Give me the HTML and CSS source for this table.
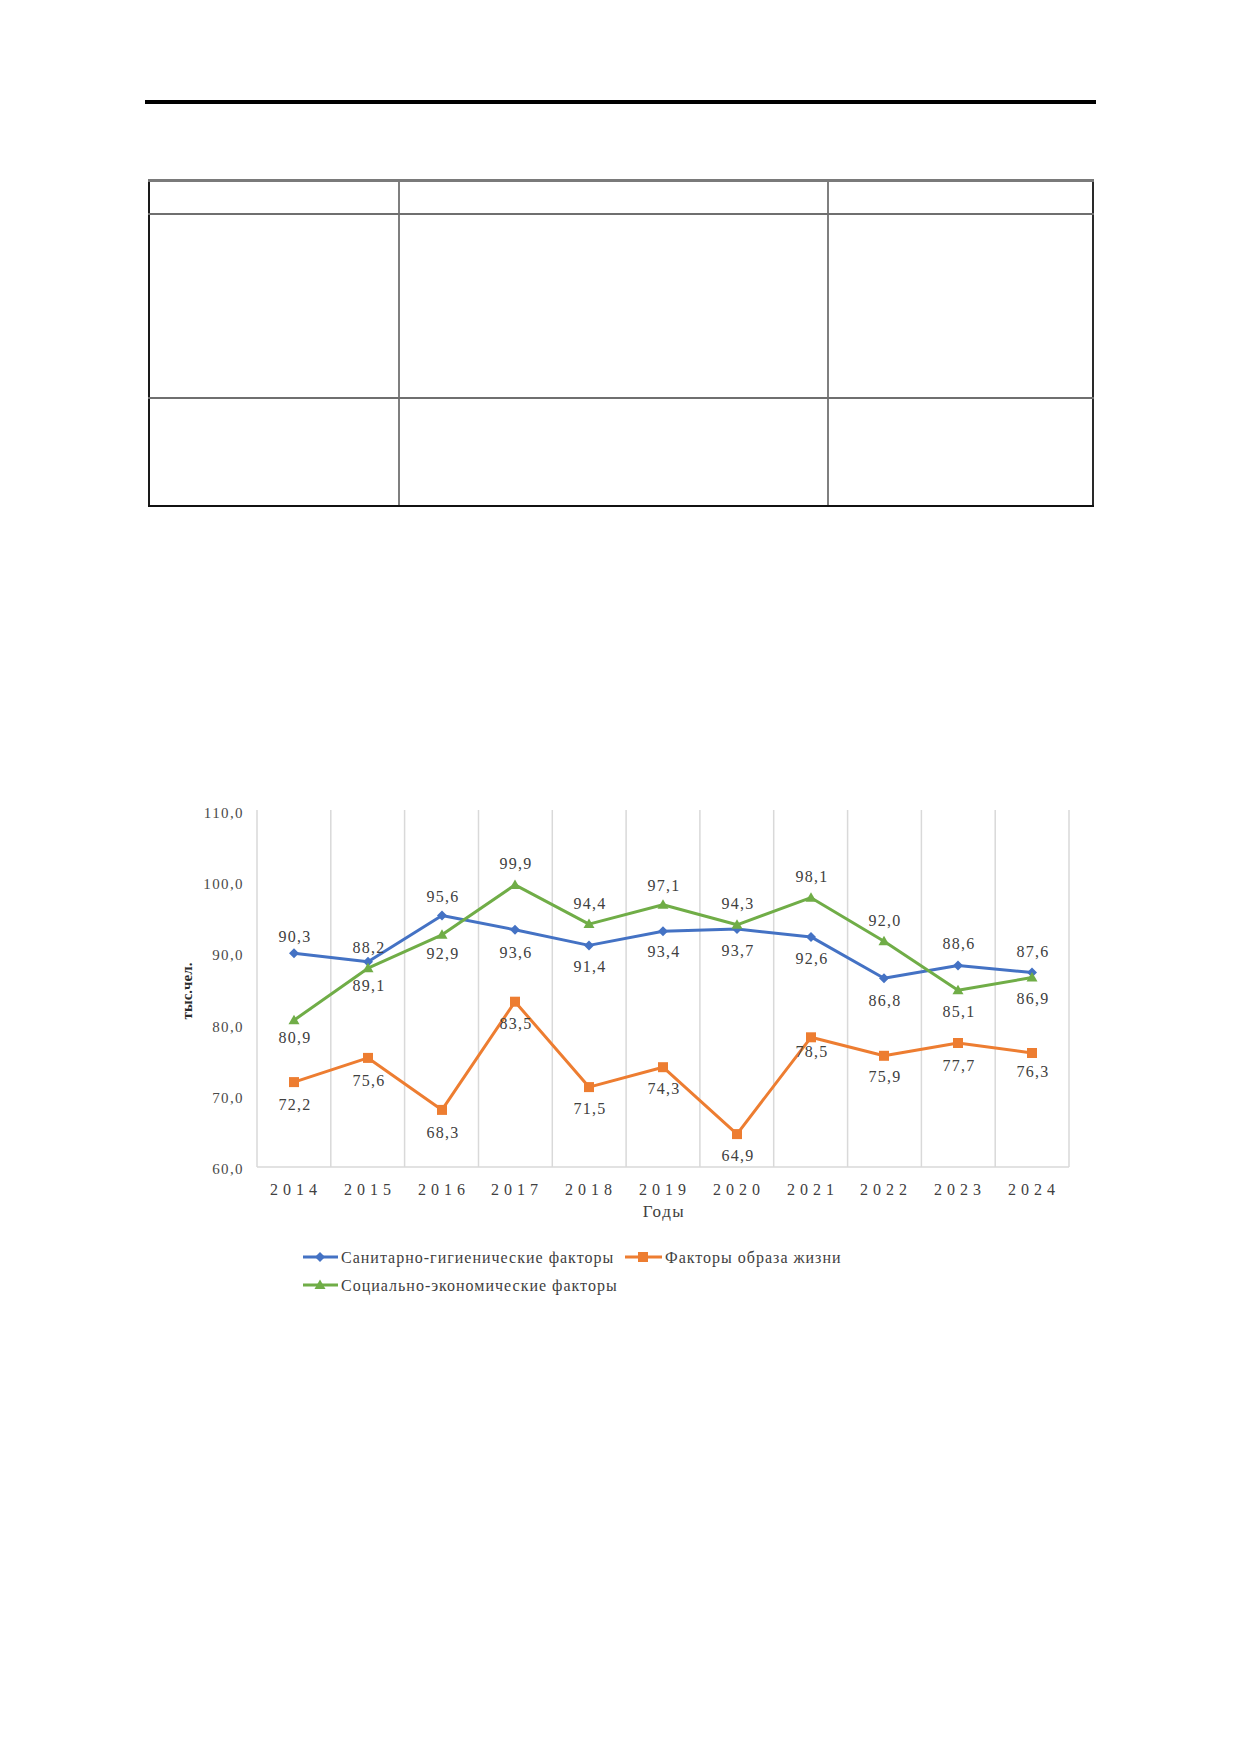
FILE: index.html
```html
<!DOCTYPE html>
<html lang="ru">
<head>
<meta charset="utf-8">
<title>Документ</title>
<link rel="stylesheet" href="styles.css">
</head>
<body>
<div class="page">
  <div class="rule"></div>
  <table class="grid-table">
    <colgroup><col class="c1"><col class="c2"><col class="c3"></colgroup>
    <tr class="r-head"><td></td><td></td><td></td></tr>
    <tr class="r-one"><td></td><td></td><td></td></tr>
    <tr class="r-two"><td></td><td></td><td></td></tr>
  </table>

  <svg class="chart" width="940" height="520" viewBox="160 790 940 520" xmlns="http://www.w3.org/2000/svg">
    <defs>
      <path id="dia" d="M0,-5 L5,0 L0,5 L-5,0 Z" fill="#4472C4"/>
      <rect id="sq" x="-5" y="-5" width="10" height="10" fill="#ED7D31"/>
      <path id="tri" d="M0,-5.5 L5.5,4 L-5.5,4 Z" fill="#70AD47"/>
    </defs>

    <!-- y axis labels -->
    <g class="ylab">
      <text x="244" y="820">110,0</text>
      <text x="244" y="891">100,0</text>
      <text x="244" y="962">90,0</text>
      <text x="244" y="1034">80,0</text>
      <text x="244" y="1105">70,0</text>
      <text x="244" y="1176">60,0</text>
    </g>
    <text class="ytitle" x="187" y="998" transform="rotate(-90 187 993)">тыс.чел.</text>

    <!-- gridlines -->
    <g class="grid">
      <line x1="257" y1="812" x2="257" y2="1169"/>
      <line x1="330.8" y1="812" x2="330.8" y2="1169"/>
      <line x1="404.6" y1="812" x2="404.6" y2="1169"/>
      <line x1="478.5" y1="812" x2="478.5" y2="1169"/>
      <line x1="552.3" y1="812" x2="552.3" y2="1169"/>
      <line x1="626.1" y1="812" x2="626.1" y2="1169"/>
      <line x1="699.9" y1="812" x2="699.9" y2="1169"/>
      <line x1="773.7" y1="812" x2="773.7" y2="1169"/>
      <line x1="847.6" y1="812" x2="847.6" y2="1169"/>
      <line x1="921.4" y1="812" x2="921.4" y2="1169"/>
      <line x1="995.2" y1="812" x2="995.2" y2="1169"/>
      <line x1="1069" y1="812" x2="1069" y2="1169"/>
      <line x1="257" y1="1169" x2="1069" y2="1169"/>
    </g>

    <!-- x axis labels -->
    <g class="xlab">
      <text x="296" y="1197">2014</text>
      <text x="370" y="1197">2015</text>
      <text x="444" y="1197">2016</text>
      <text x="517" y="1197">2017</text>
      <text x="591" y="1197">2018</text>
      <text x="665" y="1197">2019</text>
      <text x="739" y="1197">2020</text>
      <text x="813" y="1197">2021</text>
      <text x="886" y="1197">2022</text>
      <text x="960" y="1197">2023</text>
      <text x="1034" y="1197">2024</text>
    </g>
    <text class="xtitle" x="664" y="1219">Годы</text>

    <!-- series lines -->
    <polyline class="s-blue" points="294,955.3 368,963.8 442,917.5 515,931.8 589,947.4 663,933.2 737,931.1 811,938.9 884,980.2 958,967.4 1032,974.5"/>
    <polyline class="s-orange" points="294,1084.1 368,1059.9 442,1111.9 515,1003.7 589,1089.1 663,1069.2 737,1136.1 811,1039.3 884,1057.8 958,1045 1032,1055"/>
    <polyline class="s-green" points="294,1022.2 368,970.2 442,936.8 515,886.9 589,926.1 663,906.8 737,926.8 811,899.7 884,943.2 958,992.3 1032,979.5"/>

    <!-- markers -->
    <use href="#dia" x="294" y="955.3"/><use href="#dia" x="368" y="963.8"/><use href="#dia" x="442" y="917.5"/>
    <use href="#dia" x="515" y="931.8"/><use href="#dia" x="589" y="947.4"/><use href="#dia" x="663" y="933.2"/>
    <use href="#dia" x="737" y="931.1"/><use href="#dia" x="811" y="938.9"/><use href="#dia" x="884" y="980.2"/>
    <use href="#dia" x="958" y="967.4"/><use href="#dia" x="1032" y="974.5"/>

    <use href="#sq" x="294" y="1084.1"/><use href="#sq" x="368" y="1059.9"/><use href="#sq" x="442" y="1111.9"/>
    <use href="#sq" x="515" y="1003.7"/><use href="#sq" x="589" y="1089.1"/><use href="#sq" x="663" y="1069.2"/>
    <use href="#sq" x="737" y="1136.1"/><use href="#sq" x="811" y="1039.3"/><use href="#sq" x="884" y="1057.8"/>
    <use href="#sq" x="958" y="1045"/><use href="#sq" x="1032" y="1055"/>

    <use href="#tri" x="294" y="1022.2"/><use href="#tri" x="368" y="970.2"/><use href="#tri" x="442" y="936.8"/>
    <use href="#tri" x="515" y="886.9"/><use href="#tri" x="589" y="926.1"/><use href="#tri" x="663" y="906.8"/>
    <use href="#tri" x="737" y="926.8"/><use href="#tri" x="811" y="899.7"/><use href="#tri" x="884" y="943.2"/>
    <use href="#tri" x="958" y="992.3"/><use href="#tri" x="1032" y="979.5"/>

    <!-- data labels -->
    <g class="dlab">
      <text x="295" y="943.5">90,3</text>
      <text x="369" y="954.5">88,2</text>
      <text x="443" y="903.5">95,6</text>
      <text x="516" y="959.5">93,6</text>
      <text x="590" y="973.5">91,4</text>
      <text x="664" y="958.5">93,4</text>
      <text x="738" y="957.5">93,7</text>
      <text x="812" y="965.5">92,6</text>
      <text x="885" y="1007.5">86,8</text>
      <text x="959" y="950.5">88,6</text>
      <text x="1033" y="958.5">87,6</text>

      <text x="295" y="1044.5">80,9</text>
      <text x="369" y="992.5">89,1</text>
      <text x="443" y="960.5">92,9</text>
      <text x="516" y="870.5">99,9</text>
      <text x="590" y="910.5">94,4</text>
      <text x="664" y="892.5">97,1</text>
      <text x="738" y="910.5">94,3</text>
      <text x="812" y="883.5">98,1</text>
      <text x="885" y="927.5">92,0</text>
      <text x="959" y="1018.5">85,1</text>
      <text x="1033" y="1005.5">86,9</text>

      <text x="295" y="1111.5">72,2</text>
      <text x="369" y="1087.5">75,6</text>
      <text x="443" y="1139.5">68,3</text>
      <text x="516" y="1030.5">83,5</text>
      <text x="590" y="1115.5">71,5</text>
      <text x="664" y="1095.5">74,3</text>
      <text x="738" y="1162.5">64,9</text>
      <text x="812" y="1058.5">78,5</text>
      <text x="885" y="1083.5">75,9</text>
      <text x="959" y="1072.5">77,7</text>
      <text x="1033" y="1078.5">76,3</text>
    </g>

    <!-- legend -->
    <g class="legend">
      <line class="lg-blue" x1="303" y1="1259" x2="338" y2="1259"/>
      <use href="#dia" x="320" y="1259"/>
      <text x="341" y="1264.5">Санитарно-гигиенические факторы</text>
      <line class="lg-orange" x1="625" y1="1259" x2="662" y2="1259"/>
      <use href="#sq" x="643" y="1259"/>
      <text x="665" y="1264.5">Факторы образа жизни</text>
      <line class="lg-green" x1="303" y1="1287" x2="338" y2="1287"/>
      <use href="#tri" x="320" y="1287"/>
      <text x="341" y="1292.5">Социально-экономические факторы</text>
    </g>
  </svg>
</div>
</body>
</html>
```

FILE: styles.css
```css
html, body {
  margin: 0;
  padding: 0;
  background: #ffffff;
}

body {
  font-family: "Liberation Serif", "Times New Roman", serif;
  color: #000;
}

.page {
  width: 1240px;
  padding-top: 100px;
}

.rule {
  height: 4px;
  background: #000;
  margin: 0 144px 0 145px;
}

.grid-table {
  margin: 75px 0 0 148px;
  width: 944px;
  border-collapse: collapse;
  table-layout: fixed;
  border-top: 3px solid #7a7a7a;
  border-left: 2px solid #1a1a1a;
  border-right: 2px solid #2a2a2a;
  border-bottom: 2px solid #111;
}

.grid-table .c1 { width: 250px; }
.grid-table .c2 { width: 429px; }
.grid-table .c3 { width: 265px; }

.grid-table td {
  padding: 0;
  border-left: 2px solid #7f7f7f;
  border-right: 2px solid #7f7f7f;
  border-bottom: 2px solid #6f6f6f;
}

.grid-table tr:last-child td {
  border-bottom: 2px solid #111;
}

.grid-table td:first-child { border-left: 2px solid #1a1a1a; }
.grid-table td:last-child { border-right: 2px solid #2a2a2a; }

.r-head td { height: 31px; }
.r-one td { height: 182px; }
.r-two td { height: 106px; }

.chart {
  display: block;
  margin: 281px 0 0 160px;
  overflow: visible;
}

.chart text {
  font-family: "Liberation Serif", "Times New Roman", serif;
  fill: #404040;
}

.ylab text {
  font-size: 15px;
  letter-spacing: 1.4px;
  text-anchor: end;
}

.chart .ylab text { fill: #4a4a4a; }

.ytitle {
  font-size: 15px;
  font-weight: bold;
  text-anchor: middle;
}

.chart .ytitle { fill: #2a2a2a; }

.grid line {
  stroke: #d9d9d9;
  stroke-width: 1.5;
}

.xlab text {
  font-size: 16px;
  letter-spacing: 5px;
  text-anchor: middle;
}

.xtitle {
  font-size: 17px;
  letter-spacing: 1.5px;
  text-anchor: middle;
}

.s-blue, .s-orange, .s-green {
  fill: none;
  stroke-width: 3;
  stroke-linejoin: round;
  stroke-linecap: round;
}

.s-blue { stroke: #4472C4; }
.s-orange { stroke: #ED7D31; }
.s-green { stroke: #70AD47; }

.dlab text {
  font-size: 16px;
  letter-spacing: 1.3px;
  text-anchor: middle;
}

.legend line {
  stroke-width: 3;
}

.lg-blue { stroke: #4472C4; }
.lg-orange { stroke: #ED7D31; }
.lg-green { stroke: #70AD47; }

.legend text {
  font-size: 16px;
  letter-spacing: 1px;
}
```
